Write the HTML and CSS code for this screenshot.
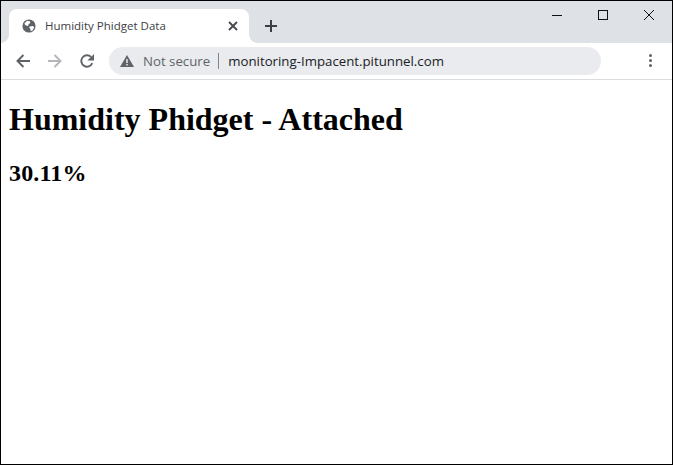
FILE: index.html
```html
<!DOCTYPE html>
<html lang="en">
<head>
<meta charset="utf-8">
<title>Humidity Phidget Data</title>
<link rel="stylesheet" href="styles.css">
</head>
<body>
<div class="window">
  <div class="tabstrip">
    <div class="tab">
      <svg class="globe" width="14" height="14" viewBox="0 0 16 16"><circle cx="8" cy="8" r="7.500" fill="#5f6368"/><path d="M3 4.500l3-2.500 3 .5.5 2-2 1.500-.5 2-2.500-.5L3 6z M9 8.500l3.500-.5 1.500 1.500-2 3.500-2 1-.5-3-1.500-1.500z" fill="#fff"/></svg>
      <span class="tab-title">Humidity Phidget Data</span>
      <svg class="tab-close" width="10" height="10" viewBox="0 0 10 10"><path d="M1 1l8 8M9 1l-8 8" stroke="#45484c" stroke-width="1.800" fill="none"/></svg>
    </div>
    <svg class="new-tab" width="14" height="14" viewBox="0 0 14 14"><path d="M7 1v12M1 7h12" stroke="#3c4043" stroke-width="2" fill="none"/></svg>
    <div class="controls">
      <svg width="12" height="12" viewBox="0 0 12 12"><path d="M1 6.500h10" stroke="#111" stroke-width="1" fill="none"/></svg>
      <svg width="12" height="12" viewBox="0 0 12 12"><rect x="1.500" y="1.500" width="9" height="9" stroke="#111" stroke-width="1" fill="none"/></svg>
      <svg width="12" height="12" viewBox="0 0 12 12"><path d="M1 1l10 10M11 1L1 11" stroke="#111" stroke-width="1" fill="none"/></svg>
    </div>
  </div>
  <div class="toolbar">
    <svg class="nav" width="14" height="14" viewBox="0 0 16 16"><path d="M16 8H2M8.500 1.200L1.700 8 8.500 14.800" stroke="#5f6368" stroke-width="2.200" fill="none"/></svg>
    <svg class="nav" width="14" height="14" viewBox="0 0 16 16"><path d="M0 8h14M7.500 1.200L14.300 8 7.500 14.800" stroke="#b4b6b9" stroke-width="2.200" fill="none"/></svg>
    <svg class="nav" width="14" height="14" viewBox="0 0 16 16"><path d="M14 10.500A6.500 6.500 0 1 1 12.600 3.400" stroke="#5f6368" stroke-width="2.200" fill="none"/><path d="M16 0v7.500H8.500z" fill="#5f6368"/></svg>
    <div class="omnibox">
      <svg class="warn" width="14" height="12" viewBox="0 0 14 12"><path d="M7 0L14 12H0z" fill="#5f6368"/><path d="M7 4v4M7 9v1.500" stroke="#fff" stroke-width="1.300"/></svg>
      <span class="not-secure">Not secure</span>
      <span class="divider"></span>
      <span class="url">monitoring-Impacent.pitunnel.com</span>
    </div>
    <div class="menu"><i></i><i></i><i></i></div>
  </div>
  <main class="page">
    <h1>Humidity Phidget - Attached</h1>
    <h2>30.11%</h2>
  </main>
</div>
</body>
</html>
```
FILE: styles.css
```css
* { box-sizing: border-box; }
html, body { margin: 0; padding: 0; }
body { width: 673px; height: 465px; overflow: hidden; background: #fff; }
.window { width: 673px; height: 465px; border: 1px solid #000; display: flex; flex-direction: column; background: #fff; }
.tabstrip { height: 42px; background: #dee1e6; display: flex; align-items: flex-start; padding: 8px 0 0 8px; flex: none; }
.tab { position: relative; width: 240px; height: 34px; background: #fff; border-radius: 8px 8px 0 0; display: flex; align-items: center; padding-left: 13px; font: 11.500px "Open Sans", "Noto Sans", sans-serif; color: #3c4043; }
.tab::before, .tab::after { content: ""; position: absolute; bottom: 0; width: 8px; height: 8px; }
.tab::before { left: -8px; background: radial-gradient(circle at 0 0, #dee1e6 7.500px, #fff 8px); }
.tab::after { right: -8px; background: radial-gradient(circle at 100% 0, #dee1e6 7.500px, #fff 8px); }
.globe { flex: none; }
.tab-title { margin-left: 9px; flex: 1; white-space: nowrap; padding-bottom: 2px; }
.tab-close { flex: none; margin-right: 11px; }
.new-tab { flex: none; margin: 10px 0 0 15px; }
.controls { margin-left: auto; display: flex; gap: 34px; padding: 0 17px 0 0; }
.toolbar { height: 37px; flex: none; background: #fff; border-bottom: 1px solid #dadce0; display: flex; align-items: center; padding: 0 0 1px 15px; }
.nav { flex: none; margin-right: 18px; }
.omnibox { margin-left: -3px; width: 492px; height: 28px; border-radius: 14px; background: #e9ebee; display: flex; align-items: center; padding-left: 11px; font: 13.250px "Open Sans", "Noto Sans", sans-serif; white-space: nowrap; }
.warn { flex: none; }
.not-secure { margin-left: 9px; color: #5f6368; }
.divider { width: 1px; height: 16px; background: #80868b; margin: 0 9px 0 8px; }
.url { color: #202124; }
.menu { margin-left: 48px; display: flex; flex-direction: column; gap: 2px; }
.menu i { display: block; width: 3px; height: 3px; border-radius: 50%; background: #5f6368; }
.page { flex: 1; padding: 8px; font-family: "Liberation Serif", serif; color: #000; }
h1 { font-size: 32px; font-weight: bold; margin: 13.400px 0 21.440px; line-height: 37px; }
h2 { font-size: 24px; font-weight: bold; margin: 0; line-height: 27px; letter-spacing: 0.150px; }
```
